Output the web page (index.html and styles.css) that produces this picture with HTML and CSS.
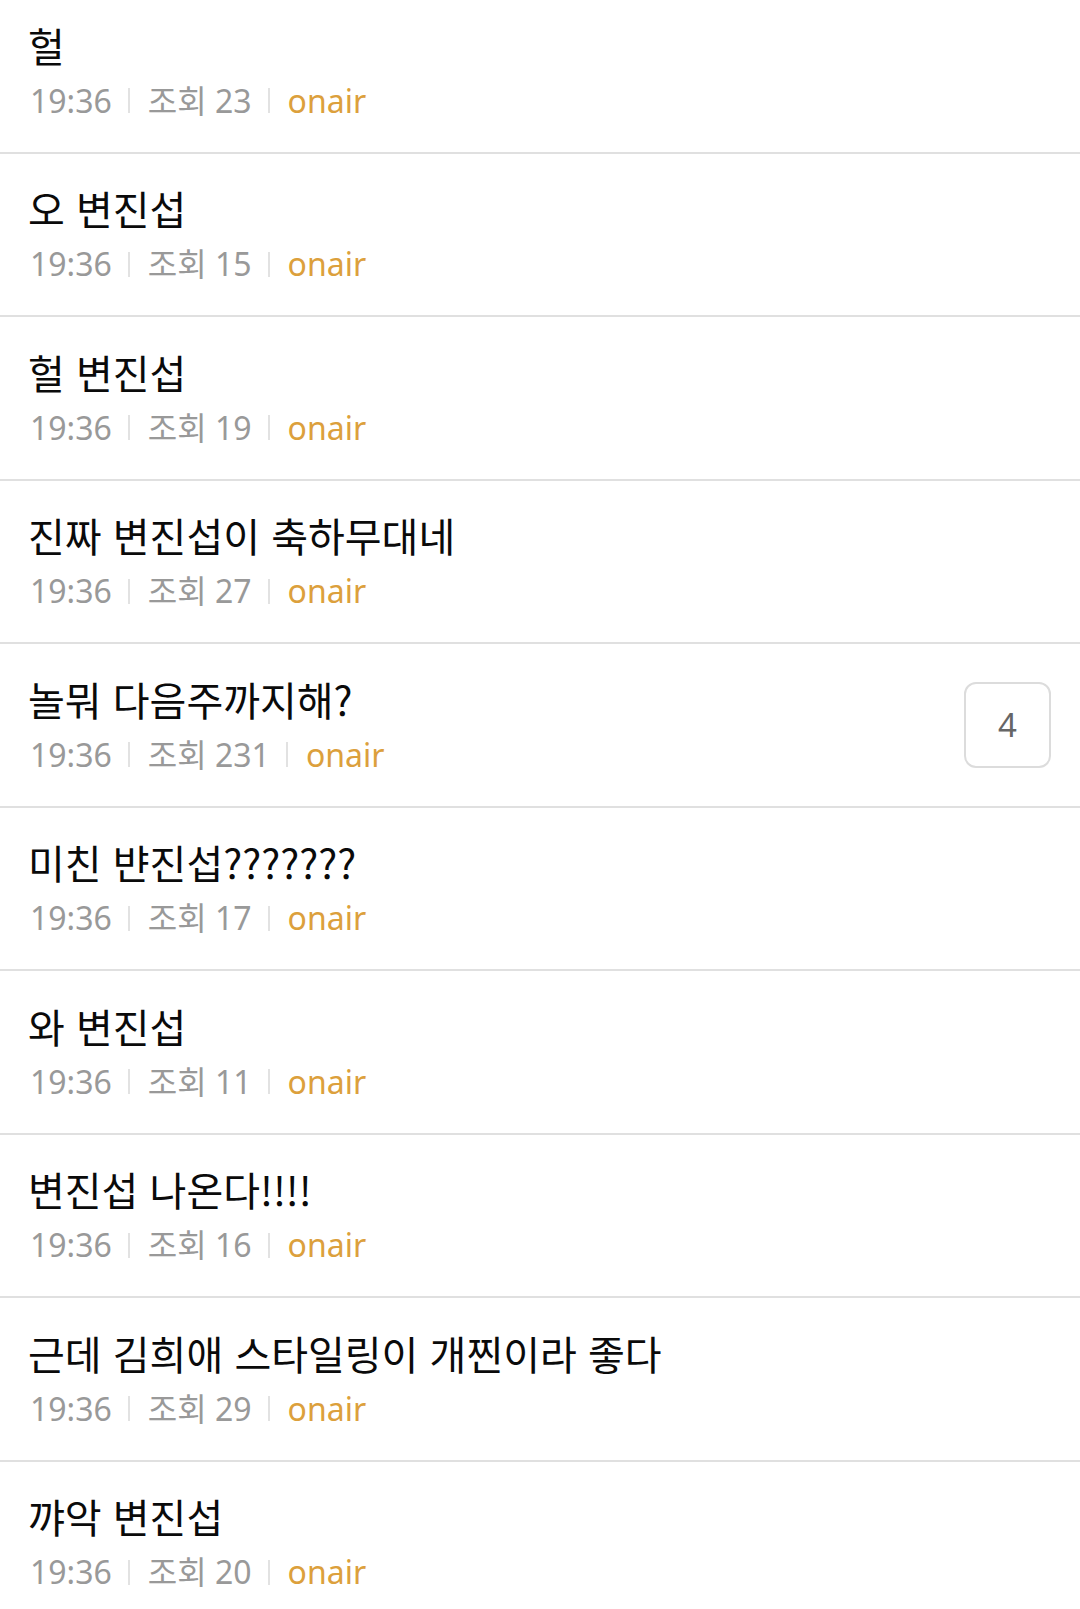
FILE: index.html
```html
<!DOCTYPE html>
<html lang="ko">
<head>
    <meta charset="UTF-8">
    <meta name="viewport" content="width=device-width, initial-scale=1.0">
    <title>onair</title>
    <link rel="stylesheet" href="styles.css">
</head>
<body>
    <ul class="board">
        <li class="post">
            <div class="post-body">
                <div class="post-title">헐</div>
                <div class="post-meta"><span>19:36</span><i class="bar"></i><span>조회 23</span><i class="bar"></i><span class="cat">onair</span></div>
            </div>
        </li>
        <li class="post">
            <div class="post-body">
                <div class="post-title">오 변진섭</div>
                <div class="post-meta"><span>19:36</span><i class="bar"></i><span>조회 15</span><i class="bar"></i><span class="cat">onair</span></div>
            </div>
        </li>
        <li class="post">
            <div class="post-body">
                <div class="post-title">헐 변진섭</div>
                <div class="post-meta"><span>19:36</span><i class="bar"></i><span>조회 19</span><i class="bar"></i><span class="cat">onair</span></div>
            </div>
        </li>
        <li class="post">
            <div class="post-body">
                <div class="post-title">진짜 변진섭이 축하무대네</div>
                <div class="post-meta"><span>19:36</span><i class="bar"></i><span>조회 27</span><i class="bar"></i><span class="cat">onair</span></div>
            </div>
        </li>
        <li class="post">
            <div class="post-body">
                <div class="post-title">놀뭐 다음주까지해?</div>
                <div class="post-meta"><span>19:36</span><i class="bar"></i><span>조회 231</span><i class="bar"></i><span class="cat">onair</span></div>
            </div>
            <div class="reply-count">4</div>
        </li>
        <li class="post">
            <div class="post-body">
                <div class="post-title">미친 뱐진섭???????</div>
                <div class="post-meta"><span>19:36</span><i class="bar"></i><span>조회 17</span><i class="bar"></i><span class="cat">onair</span></div>
            </div>
        </li>
        <li class="post">
            <div class="post-body">
                <div class="post-title">와 변진섭</div>
                <div class="post-meta"><span>19:36</span><i class="bar"></i><span>조회 11</span><i class="bar"></i><span class="cat">onair</span></div>
            </div>
        </li>
        <li class="post">
            <div class="post-body">
                <div class="post-title">변진섭 나온다!!!!</div>
                <div class="post-meta"><span>19:36</span><i class="bar"></i><span>조회 16</span><i class="bar"></i><span class="cat">onair</span></div>
            </div>
        </li>
        <li class="post">
            <div class="post-body">
                <div class="post-title">근데 김희애 스타일링이 개찐이라 좋다</div>
                <div class="post-meta"><span>19:36</span><i class="bar"></i><span>조회 29</span><i class="bar"></i><span class="cat">onair</span></div>
            </div>
        </li>
        <li class="post">
            <div class="post-body">
                <div class="post-title">꺄악 변진섭</div>
                <div class="post-meta"><span>19:36</span><i class="bar"></i><span>조회 20</span><i class="bar"></i><span class="cat">onair</span></div>
            </div>
        </li>
    </ul>
</body>
</html>
```

FILE: styles.css
```css
body {
    margin: 0;
    background: #fff;
    font-family: "Noto Sans", "Noto Sans CJK KR", sans-serif;
    overflow: hidden;
}
.board {
    list-style: none;
    margin: -10px 0 0;
    padding: 0;
}
.post {
    box-sizing: border-box;
    height: 163.5px;
    display: flex;
    align-items: center;
    padding: 0 29px 0 30px;
    border-bottom: 2px solid #e0e0e0;
}
.post-body {
    flex: 1;
}
.post-title {
    margin-left: -2px;
    font-size: 40px;
    line-height: 52px;
    color: #0a0a0a;
    font-family: "Noto Sans CJK KR", sans-serif;
}
.post-meta {
    display: flex;
    align-items: center;
    margin-top: 8px;
    font-size: 32px;
    line-height: 44px;
    color: #999;
}
.bar {
    display: inline-block;
    width: 2px;
    height: 25px;
    margin: 0 18px 0 16px;
    background: #e2e2e2;
}
.cat {
    color: #dca03c;
}
.reply-count {
    box-sizing: border-box;
    width: 87px;
    height: 86px;
    border: 2px solid #dcdcdc;
    border-radius: 12px;
    display: flex;
    align-items: center;
    justify-content: center;
    font-size: 33px;
    color: #666;
}
```
